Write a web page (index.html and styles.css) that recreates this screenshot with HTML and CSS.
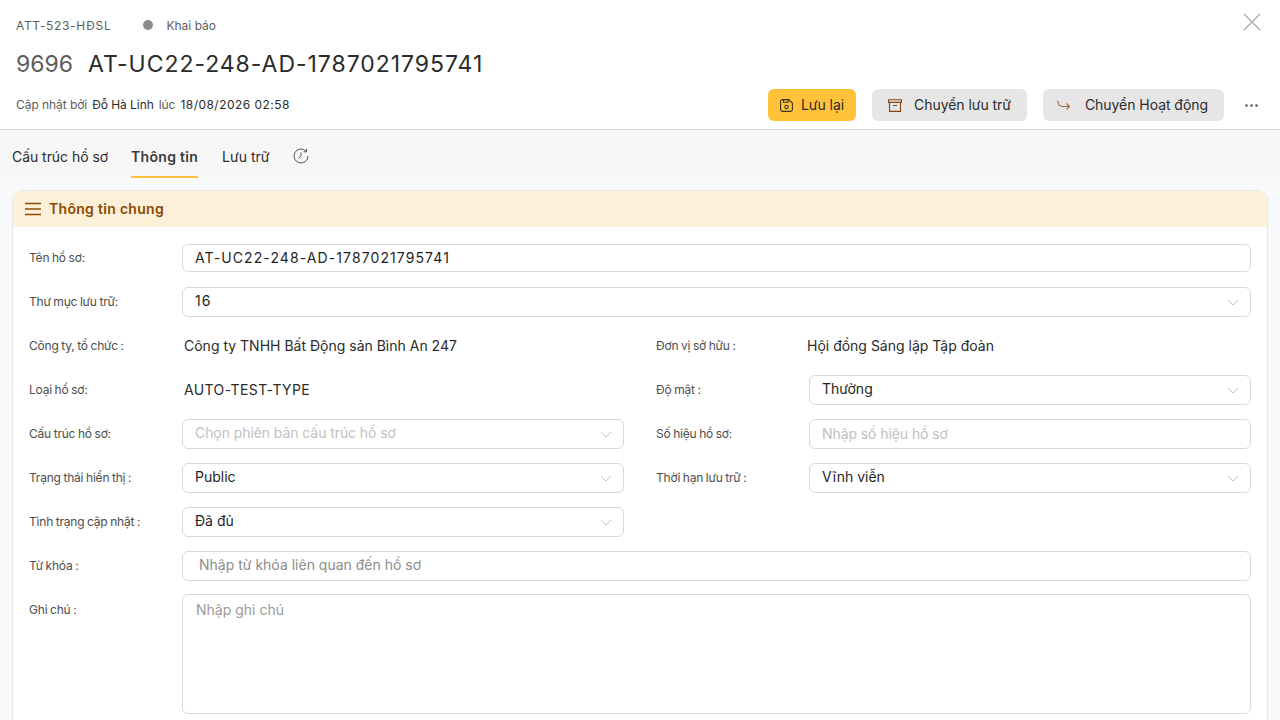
FILE: index.html
```html
<!DOCTYPE html>
<html lang="vi">
	<head>
		<meta charset="UTF-8" />
		<meta
			name="viewport"
			content="width=device-width, initial-scale=1.0" />
		<title>AT-UC22-248-AD-1787021795741</title>

		<link rel="stylesheet" href="styles.css">
	</head>
	<body>
		<header class="head">
			<div class="head__meta">
				<span class="head__code">ATT-523-HĐSL</span>
				<span class="head__dot"></span>
				<span class="head__status">Khai báo</span>
			</div>
			<button class="head__close" aria-label="Đóng">
				<svg width="18" height="18" viewBox="0 0 18 18"><path d="M1 1l16 16M17 1L1 17" /></svg>
			</button>
			<h1 class="head__title"><span class="head__num">9696</span>AT-UC22-248-AD-1787021795741</h1>
			<div class="head__bar">
				<p class="head__update">
					<span>Cập nhật bởi</span>
					<b>Đỗ Hà Linh</b>
					<span>lúc</span>
					<b class="head__time">18/08/2026 02:58</b>
				</p>
				<div class="actions">
					<button class="btn btn--save">
						<svg class="btn__icon" width="13" height="13" viewBox="0 0 13 13"><path d="M.6 2.400C.6 1.400 1.400.6 2.400.6h6.300l3.700 3.400v6.600c0 1-.8 1.800-1.800 1.800H2.400c-1 0-1.800-.8-1.800-1.800z" /><path d="M3.500.6v2.600h4.600V.6" /><circle cx="6.500" cy="8" r="1.700" /></svg>
						Lưu lại
					</button>
					<button class="btn btn--archive">
						<svg class="btn__icon" width="14" height="13" viewBox="0 0 14 13"><path d="M.5.8h13v2.600H.5zM1.500 3.400v9h11v-9M5 6.500h4" /></svg>
						Chuyển lưu trữ
					</button>
					<button class="btn btn--move">
						<svg class="btn__icon" width="13" height="11" viewBox="0 0 13 11"><path d="M.8.8c.2 4 1.800 5.700 4.700 5.700h6.700M9.500 3.500l3 3-3 3" /></svg>
						Chuyển Hoạt động
					</button>
					<button class="more" aria-label="Thêm">
						<svg width="13" height="3" viewBox="0 0 13 3"><circle cx="1.500" cy="1.500" r="1.300" /><circle cx="6.500" cy="1.500" r="1.300" /><circle cx="11.500" cy="1.500" r="1.300" /></svg>
					</button>
				</div>
			</div>
		</header>

		<nav class="tabs">
			<a class="tabs__item tabs__item--first">Cấu trúc hồ sơ</a>
			<a class="tabs__item tabs__item--active">Thông tin</a>
			<a class="tabs__item">Lưu trữ</a>
			<svg class="tabs__history" width="16" height="16" viewBox="0 0 16 16"><path d="M12.950 3.050A7 7 0 1 0 15 8" /><path d="M13.500.8v3h-3" /><path d="M8 4.500V8L5.500 10.500" /></svg>
		</nav>

		<main class="content">
			<section class="card">
				<h2 class="card__head">
					<svg width="16" height="14" viewBox="0 0 16 14"><path d="M0 1.500h16M0 7h16M0 12.500h16" /></svg>
					<span>Thông tin chung</span>
				</h2>
				<div class="form">
					<label class="form__label">Tên hồ sơ:</label>
					<div class="field field--wide field--first">AT-UC22-248-AD-1787021795741</div>

					<label class="form__label">Thư mục lưu trữ:</label>
					<div class="field field--wide field--select field--num">16
						<svg class="chevron" width="12" height="7" viewBox="0 0 12 7"><path d="M1 1l5 5 5-5" /></svg>
					</div>

					<label class="form__label">Công ty, tổ chức :</label>
					<div class="form__value">Công ty TNHH Bất Động sản Bình An 247</div>
					<span></span>
					<label class="form__label">Đơn vị sở hữu :</label>
					<div class="form__value form__value--owner">Hội đồng Sáng lập Tập đoàn</div>

					<label class="form__label">Loại hồ sơ:</label>
					<div class="form__value form__value--type">AUTO-TEST-TYPE</div>
					<span></span>
					<label class="form__label">Độ mật :</label>
					<div class="field field--select">Thường
						<svg class="chevron" width="12" height="7" viewBox="0 0 12 7"><path d="M1 1l5 5 5-5" /></svg>
					</div>

					<label class="form__label">Cấu trúc hồ sơ:</label>
					<div class="field field--select field--empty">Chọn phiên bản cấu trúc hồ sơ
						<svg class="chevron" width="12" height="7" viewBox="0 0 12 7"><path d="M1 1l5 5 5-5" /></svg>
					</div>
					<span></span>
					<label class="form__label">Số hiệu hồ sơ:</label>
					<div class="field field--empty">Nhập số hiệu hồ sơ</div>

					<label class="form__label">Trạng thái hiển thị :</label>
					<div class="field field--select">Public
						<svg class="chevron" width="12" height="7" viewBox="0 0 12 7"><path d="M1 1l5 5 5-5" /></svg>
					</div>
					<span></span>
					<label class="form__label">Thời hạn lưu trữ :</label>
					<div class="field field--select">Vĩnh viễn
						<svg class="chevron" width="12" height="7" viewBox="0 0 12 7"><path d="M1 1l5 5 5-5" /></svg>
					</div>

					<label class="form__label">Tình trạng cập nhật :</label>
					<div class="field field--select">Đã đủ
						<svg class="chevron" width="12" height="7" viewBox="0 0 12 7"><path d="M1 1l5 5 5-5" /></svg>
					</div>
					<span class="form__rest"></span>

					<label class="form__label">Từ khóa :</label>
					<div class="field field--wide field--empty field--tags">Nhập từ khóa liên quan đến hồ sơ</div>

					<label class="form__label form__label--note">Ghi chú :</label>
					<div class="field field--wide field--empty field--note">Nhập ghi chú</div>
				</div>
			</section>
		</main>
	</body>
</html>
```

FILE: styles.css
```css
* {
	box-sizing: border-box;
}
html,
body {
	height: 100%;
	overflow: hidden;
}
body {
	display: flex;
	flex-direction: column;
	margin: 0;
	background-color: #f8f9fb;
	color: #2b2b2b;
	font-family: Inter, 'Noto Sans', sans-serif;
	font-size: 14px;
}
button {
	font-family: inherit;
	border: 0;
	background: none;
	padding: 0;
}

/* header */

.head {
	position: relative;
	flex: none;
	height: 130px;
	padding: 17px 16px 0;
	background-color: #fff;
	border-bottom: 1px solid #d9d9d9;
}
.head__meta {
	display: flex;
	align-items: center;
	height: 16px;
	font-size: 12px;
	color: #5c5c5c;
}
.head__code {
	letter-spacing: 0.67px;
}
.head__dot {
	width: 10px;
	height: 10px;
	margin: 0 13px 0 32px;
	border-radius: 50%;
	background-color: #8c8c8c;
}
.head__close {
	position: absolute;
	top: 13px;
	right: 19px;
	line-height: 0;
}
.head__close path {
	fill: none;
	stroke: #a6a6a6;
	stroke-width: 1.2;
}
.head__title {
	display: flex;
	margin: 15px 0 0;
	height: 32px;
	font-size: 23px;
	line-height: 32px;
	font-weight: 400;
	letter-spacing: 0.96px;
	color: #2b2b2b;
}
.head__num {
	margin-right: 15px;
	letter-spacing: 0;
	color: #5c5c5c;
}
.head__bar {
	display: flex;
	align-items: center;
	justify-content: space-between;
	margin-top: 9px;
}
.head__update {
	display: flex;
	gap: 5px;
	margin: -2px 0 0;
	font-size: 12px;
	letter-spacing: -0.06px;
	color: #5c5c5c;
}
.head__update b {
	font-weight: 400;
	color: #2b2b2b;
}
.head__update .head__time {
	letter-spacing: 0.47px;
}

/* actions */

.actions {
	display: flex;
	align-items: center;
	gap: 16px;
}
.btn {
	display: flex;
	align-items: center;
	height: 32px;
	padding-bottom: 2px;
	border-radius: 6px;
	font-size: 14px;
	letter-spacing: -0.05px;
	color: #2b2b2b;
	background-color: #e6e6e6;
}
.btn__icon {
	margin-top: 2px;
	fill: none;
	stroke: #8b4513;
	stroke-width: 1.1;
}
.btn--save {
	gap: 8px;
	padding: 0 12px 2px;
	background-color: #ffc239;
}
.btn--save .btn__icon {
	stroke: #3d3320;
}
.btn--archive {
	gap: 12px;
	padding: 0 16px 2px;
}
.btn--move {
	gap: 15px;
	padding: 0 16px 2px 14px;
}
.btn--move .btn__icon {
	stroke: #a5683f;
}
.more {
	display: flex;
	margin: 0 6px 0 5px;
	line-height: 0;
}
.more circle {
	fill: #5c5c5c;
}

/* tabs */

.tabs {
	display: flex;
	flex: none;
	align-items: center;
	gap: 24px;
	height: 48px;
	padding: 0 12px;
	background-color: #f7f7f7;
}
.tabs__item {
	display: flex;
	align-items: center;
	height: 48px;
	padding-top: 6px;
	font-size: 14px;
	color: #2b2b2b;
	border-bottom: 2px solid transparent;
}
.tabs__item--first {
	margin-right: -1px;
	letter-spacing: -0.05px;
}
.tabs__item--active {
	font-weight: 600;
	letter-spacing: 0.3px;
	color: #3a3a3a;
	border-bottom-color: #ffc239;
}
.tabs__history {
	margin-top: 4px;
	fill: none;
	stroke: #555;
	stroke-width: 1;
}

/* card */

.content {
	flex: 1;
	min-height: 0;
	overflow: hidden;
	padding: 12px 12px 0;
}
.card {
	height: 600px;
	background-color: #fff;
	border: 1px solid #e5e7eb;
	border-radius: 10px;
	overflow: hidden;
}
.card__head {
	display: flex;
	align-items: center;
	gap: 8px;
	height: 36px;
	margin: 0;
	padding-left: 12px;
	background-color: #fdf0d9;
	font-size: 14px;
	font-weight: 600;
	letter-spacing: 0.3px;
	color: #8b4a00;
}
.card__head span {
	margin-top: -2px;
}
.card__head path {
	fill: none;
	stroke: #8b4a00;
	stroke-width: 1.6;
}

/* form */

.form {
	display: grid;
	grid-template-columns: 153px 442px 32px 153px 442px;
	grid-template-rows: 29px;
	grid-auto-rows: 30px;
	row-gap: 14px;
	padding: 17px 0 0 16px;
}
.form__label {
	display: flex;
	align-items: center;
	padding-bottom: 2px;
	font-size: 12px;
	letter-spacing: -0.2px;
	word-spacing: -0.5px;
	color: #4d4d4d;
}
.form__label--note {
	align-items: flex-start;
	padding: 0;
	margin-top: 7px;
}
.form__value {
	display: flex;
	align-items: center;
	padding: 0 0 2px 2px;
	color: #2b2b2b;
}
.form__value--owner {
	padding-left: 0;
	margin-left: -2px;
}
.form__value--type {
	letter-spacing: 0.4px;
}
.form__rest {
	grid-column: span 3;
}
.field {
	position: relative;
	display: flex;
	align-items: center;
	padding: 0 12px 2px;
	background-color: #fff;
	border: 1px solid #d9d9d9;
	border-radius: 6px;
	color: #1f1f1f;
}
.field--wide {
	grid-column: span 4;
}
.field--first {
	height: 28px;
	letter-spacing: 1.1px;
}
.field--select {
	padding-bottom: 4px;
}
.field--num {
	letter-spacing: 1px;
}
.field--empty {
	letter-spacing: -0.08px;
	color: #bfbfbf;
}
.field--tags {
	padding: 0 12px 4px 16px;
	letter-spacing: 0;
	color: #8c8c8c;
}
.field--note {
	align-items: flex-start;
	height: 120px;
	margin-top: -1px;
	padding: 6px 13px 0;
	letter-spacing: 0;
	color: #9a9a9a;
}
.chevron {
	position: absolute;
	top: 11px;
	right: 11px;
	fill: none;
	stroke: #c4c4c4;
	stroke-width: 1;
}
```
